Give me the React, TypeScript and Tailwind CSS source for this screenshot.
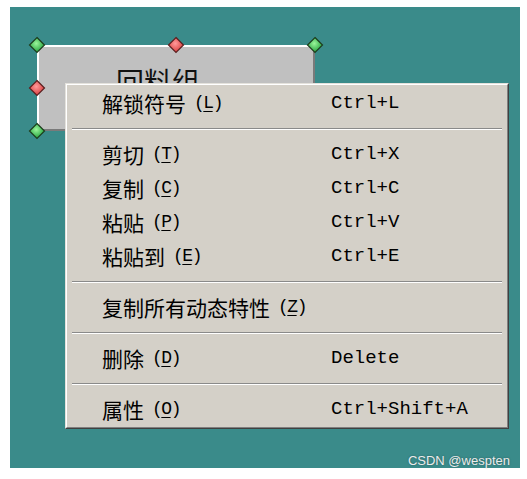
import React from "react";

type Item = { label: string; key: string; shortcut: string };

const groups: Item[][] = [
  [{ label: "解锁符号", key: "L", shortcut: "Ctrl+L" }],
  [
    { label: "剪切", key: "T", shortcut: "Ctrl+X" },
    { label: "复制", key: "C", shortcut: "Ctrl+C" },
    { label: "粘贴", key: "P", shortcut: "Ctrl+V" },
    { label: "粘贴到", key: "E", shortcut: "Ctrl+E" },
  ],
  [{ label: "复制所有动态特性", key: "Z", shortcut: "" }],
  [{ label: "删除", key: "D", shortcut: "Delete" }],
  [{ label: "属性", key: "O", shortcut: "Ctrl+Shift+A" }],
];

function Diamond({ x, y, red }: { x: number; y: number; red?: boolean }) {
  const id = red ? "gr" : "gg";
  return (
    <svg
      width="18"
      height="18"
      viewBox="0 0 18 18"
      className="absolute"
      style={{ left: x - 9, top: y - 9 }}
    >
      <defs>
        <radialGradient id={id} cx="0.45" cy="0.4" r="0.6">
          <stop offset="0" stopColor={red ? "#ff9a9a" : "#9af59a"} />
          <stop offset="1" stopColor={red ? "#d83b3b" : "#1f9f3a"} />
        </radialGradient>
      </defs>
      <polygon
        points="9,1.5 16.5,9 9,16.5 1.5,9"
        fill={`url(#${id})`}
        stroke={red ? "#5a2020" : "#1d3d1d"}
        strokeWidth="1.2"
      />
    </svg>
  );
}

function Row({ item }: { item: Item }) {
  return (
    <div className="flex h-[34px] items-center pl-[34px] text-[#000]">
      <div className="flex w-[229px] items-center">
        <span className="text-[21px] leading-none [font-family:'Noto_Sans_CJK_SC',sans-serif]">
          {item.label}
        </span>
        <span className="ml-[8px] text-[18px] leading-none tracking-[-1.5px] [font-family:'Liberation_Mono',monospace]">
          (<span className="underline underline-offset-[3px]">{item.key}</span>)
        </span>
      </div>
      <span className="text-[19px] leading-none [font-family:'Liberation_Mono',monospace]">
        {item.shortcut}
      </span>
    </div>
  );
}

function Separator() {
  return (
    <div className="flex h-[17px] items-center px-[4px]">
      <div className="h-[2px] w-full border-t border-b border-t-[#8a8a8a] border-b-[#ffffff]" />
    </div>
  );
}

export default function App() {
  return (
    <div className="h-[479px] w-[527px] bg-white pl-[10px] pt-[7px]">
      <div className="relative h-[461px] w-[510px] bg-[#3a8b8a]">
        {/* symbol box */}
        <div className="absolute left-[27px] top-[38px] h-[86px] w-[278px] border-2 border-t-white border-l-white border-r-[#7a7a7a] border-b-[#7a7a7a] bg-[#c0c0c0] pl-[77px] pt-[20px]">
          <span className="text-[28px] leading-none text-[#111] [font-family:'Noto_Sans_CJK_SC',sans-serif]">
            回料组
          </span>
        </div>
        <Diamond x={27} y={38} />
        <Diamond x={166} y={38} red />
        <Diamond x={305} y={38} />
        <Diamond x={27} y={81} red />
        <Diamond x={27} y={124} />

        {/* context menu */}
        <div className="absolute left-[55px] top-[76px] w-[444px] border border-t-[#e4e2dc] border-l-[#e4e2dc] border-r-[#404040] border-b-[#404040]">
          <div className="border border-t-white border-l-white border-r-[#808080] border-b-[#808080] bg-[#d4d0c8] px-px py-px">
            {groups.map((g, gi) => (
              <div key={gi}>
                {gi > 0 && <Separator />}
                {g.map((it) => (
                  <Row key={it.label} item={it} />
                ))}
              </div>
            ))}
          </div>
        </div>

        <div className="absolute bottom-[1px] right-[10px] text-[13px] leading-none text-[#ececec] [font-family:'Liberation_Sans',sans-serif] [text-shadow:0_0_2px_rgba(0,0,0,0.35)]">
          CSDN @wespten
        </div>
      </div>
    </div>
  );
}
